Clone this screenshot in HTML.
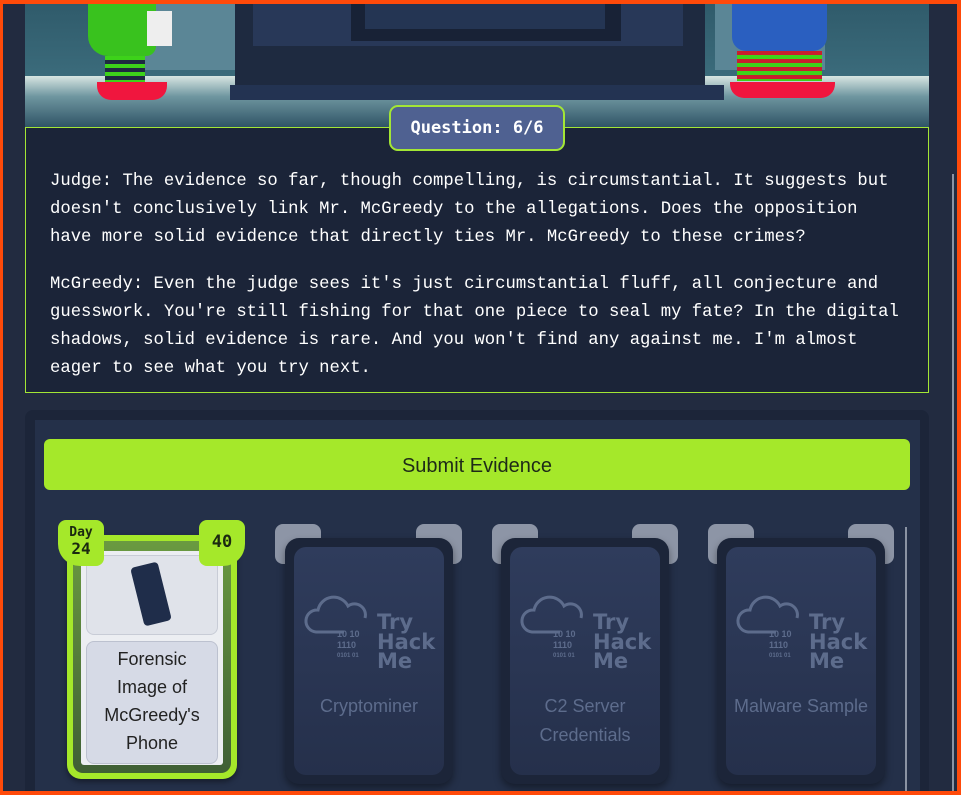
<!DOCTYPE html>
<html><head><style>
*{margin:0;padding:0;box-sizing:border-box}
html,body{width:961px;height:795px;overflow:hidden}
body{background:#222b40;position:relative;font-family:"Liberation Sans",sans-serif}
.abs{position:absolute}
.txt{font-family:"Liberation Mono",monospace;font-size:17.25px;line-height:28px;color:#fff}
.card{position:absolute;width:168px;height:246px;background:#1c2539;border-radius:14px;box-shadow:0 4px 8px rgba(0,0,0,.4)}
.card .in{position:absolute;left:9px;top:9px;right:9px;bottom:9px;border-radius:12px;background:linear-gradient(#2f3c5c,#25304b)}
.tab{position:absolute;width:46px;height:40px;background:#8d95a6;border-radius:8px;top:524px}
.lbl{position:absolute;left:0;right:0;text-align:center;color:#5d6c8c;font-size:18px;line-height:29px}
.logo{position:absolute;left:8px;top:48px}
</style></head><body>
<!-- top image -->
<div class="abs" style="left:25px;top:0;width:904px;height:127px;background:linear-gradient(#2f5a6a,#3d6e7e 70%,#2a4b5c);overflow:hidden">
 <div class="abs" style="left:0;top:76px;width:904px;height:51px;background:linear-gradient(#d8e6e2,#6f96a0 40%,#2f5466)"></div>
 <div class="abs" style="left:110px;top:0;width:110px;height:70px;background:#5b8696"></div>
 <div class="abs" style="left:690px;top:0;width:110px;height:70px;background:#5b8696"></div>
 <div class="abs" style="left:210px;top:0;width:470px;height:96px;background:#1e2a40"></div>
 <div class="abs" style="left:228px;top:0;width:430px;height:46px;background:#283858"></div>
 <div class="abs" style="left:326px;top:0;width:270px;height:41px;background:#182236"></div>
 <div class="abs" style="left:340px;top:0;width:240px;height:29px;background:#243553"></div>
 <div class="abs" style="left:205px;top:85px;width:494px;height:15px;background:#233352"></div>
 <!-- elves -->
 <div class="abs" style="left:63px;top:0;width:68px;height:56px;background:#39c21e;border-radius:0 0 10px 20px"></div>
 <div class="abs" style="left:122px;top:11px;width:25px;height:35px;background:#eee"></div>
 <div class="abs" style="left:80px;top:56px;width:40px;height:26px;background:repeating-linear-gradient(#3dd21a 0 4px,#1e2a40 4px 8px)"></div>
 <div class="abs" style="left:72px;top:82px;width:70px;height:18px;background:#f0163e;border-radius:0 0 14px 14px"></div>
 <div class="abs" style="left:707px;top:0;width:95px;height:51px;background:#2a5fc0;border-radius:0 0 14px 14px"></div>
 <div class="abs" style="left:712px;top:51px;width:85px;height:30px;background:repeating-linear-gradient(#c81e2e 0 4px,#3dd21a 4px 8px)"></div>
 <div class="abs" style="left:705px;top:82px;width:105px;height:16px;background:#f0163e;border-radius:0 0 14px 14px"></div>
</div>
<!-- text box -->
<div class="abs" style="left:25px;top:127px;width:904px;height:266px;background:#1b2438;border:1px solid #a3e635"></div>
<div class="abs" style="left:389px;top:105px;width:176px;height:46px;background:#4f6191;border:2px solid #a3e635;border-radius:9px;color:#fff;font-family:'DejaVu Sans Mono','Liberation Mono',monospace;font-weight:bold;font-size:17px;line-height:42px;text-align:center">Question: 6/6</div>
<div class="abs txt" style="left:50px;top:168px;width:870px">Judge: The evidence so far, though compelling, is circumstantial. It suggests but<br>doesn't conclusively link Mr. McGreedy to the allegations. Does the opposition<br>have more solid evidence that directly ties Mr. McGreedy to these crimes?</div>
<div class="abs txt" style="left:50px;top:271px;width:870px">McGreedy: Even the judge sees it's just circumstantial fluff, all conjecture and<br>guesswork. You're still fishing for that one piece to seal my fate? In the digital<br>shadows, solid evidence is rare. And you won't find any against me. I'm almost<br>eager to see what you try next.</div>
<!-- scrollbar -->
<div class="abs" style="left:952px;top:174px;width:2px;height:630px;background:#8a93a3"></div>
<!-- lower panel -->
<div class="abs" style="left:25px;top:410px;width:904px;height:400px;background:#1c2539;border-radius:8px"></div>
<div class="abs" style="left:35px;top:420px;width:885px;height:400px;background:#243049"></div>
<div class="abs" style="left:44px;top:439px;width:866px;height:51px;background:#a5e82a;border-radius:6px;text-align:center;line-height:54px;font-size:20px;color:#1e2a18">Submit Evidence</div>
<div class="abs" style="left:905px;top:527px;width:2px;height:280px;background:#8a93a3"></div>
<!-- first card -->
<div class="abs" style="left:67px;top:535px;width:170px;height:244px;background:#a5e82a;border-radius:14px;box-shadow:0 3px 6px rgba(0,0,0,.4)"></div>
<div class="abs" style="left:73px;top:541px;width:158px;height:232px;background:linear-gradient(#6a9a40,#3f5f35);border-radius:10px"></div>
<div class="abs" style="left:81px;top:551px;width:142px;height:214px;background:#eceef2;border-radius:3px"></div>
<div class="abs" style="left:86px;top:555px;width:132px;height:80px;background:#e0e3ea;border:1px solid #c8ccd6;border-radius:8px"></div>
<div class="abs" style="left:137px;top:564px;width:28px;height:60px;background:#1f2d4a;border-radius:4px;transform:rotate(-14deg)"></div>
<div class="abs" style="left:86px;top:641px;width:132px;height:123px;background:#d6dae6;border:1px solid #bcc1cf;border-radius:8px;text-align:center;font-size:18px;line-height:28px;color:#222;padding-top:3px">Forensic<br>Image of<br>McGreedy's<br>Phone</div>
<div class="abs" style="left:58px;top:520px;width:46px;height:46px;background:#a5e82a;border-radius:8px 8px 8px 22px;text-align:center;font-family:'DejaVu Sans Mono',monospace;font-weight:bold;color:#1b2a10;font-size:13px;line-height:14px;padding-top:6px">Day<br><span style="font-size:16px;line-height:18px">24</span></div>
<div class="abs" style="left:199px;top:520px;width:46px;height:46px;background:#a5e82a;border-radius:8px 8px 22px 8px;text-align:center;font-family:'DejaVu Sans Mono',monospace;font-weight:bold;color:#1b2a10;font-size:17px;line-height:44px">40</div>
<!-- locked cards -->
<div class="tab" style="left:275px"></div><div class="tab" style="left:416px"></div>
<div class="tab" style="left:492px"></div><div class="tab" style="left:632px"></div>
<div class="tab" style="left:708px"></div><div class="tab" style="left:848px"></div>

<div class="card" style="left:285px;top:538px"><div class="in">
<svg class="logo" width="140" height="80" viewBox="0 0 140 80"><path d="M42 37H14a11 11 0 0 1 2-22 16 16 0 0 1 30-4 11 11 0 0 1 17 12" fill="none" stroke="#5d6c8c" stroke-width="3"/><text x="35" y="42" fill="#5d6c8c" font-size="9" font-family="Liberation Sans" font-weight="bold">10  10</text><text x="35" y="53" fill="#5d6c8c" font-size="9" font-family="Liberation Sans" font-weight="bold">1110</text><text x="35" y="62" fill="#5d6c8c" font-size="6" font-family="Liberation Sans" font-weight="bold">0101  01</text><text x="75" y="34" fill="#5d6c8c" font-size="21" font-family="DejaVu Sans" font-weight="bold">Try</text><text x="75" y="54" fill="#5d6c8c" font-size="21" font-family="DejaVu Sans" font-weight="bold">Hack</text><text x="75" y="73" fill="#5d6c8c" font-size="21" font-family="DejaVu Sans" font-weight="bold">Me</text></svg>
<div class="lbl" style="top:145px">Cryptominer</div></div></div>

<div class="card" style="left:501px;top:538px"><div class="in">
<svg class="logo" width="140" height="80" viewBox="0 0 140 80"><path d="M42 37H14a11 11 0 0 1 2-22 16 16 0 0 1 30-4 11 11 0 0 1 17 12" fill="none" stroke="#5d6c8c" stroke-width="3"/><text x="35" y="42" fill="#5d6c8c" font-size="9" font-family="Liberation Sans" font-weight="bold">10  10</text><text x="35" y="53" fill="#5d6c8c" font-size="9" font-family="Liberation Sans" font-weight="bold">1110</text><text x="35" y="62" fill="#5d6c8c" font-size="6" font-family="Liberation Sans" font-weight="bold">0101  01</text><text x="75" y="34" fill="#5d6c8c" font-size="21" font-family="DejaVu Sans" font-weight="bold">Try</text><text x="75" y="54" fill="#5d6c8c" font-size="21" font-family="DejaVu Sans" font-weight="bold">Hack</text><text x="75" y="73" fill="#5d6c8c" font-size="21" font-family="DejaVu Sans" font-weight="bold">Me</text></svg>
<div class="lbl" style="top:145px">C2 Server<br>Credentials</div></div></div>

<div class="card" style="left:717px;top:538px"><div class="in">
<svg class="logo" width="140" height="80" viewBox="0 0 140 80"><path d="M42 37H14a11 11 0 0 1 2-22 16 16 0 0 1 30-4 11 11 0 0 1 17 12" fill="none" stroke="#5d6c8c" stroke-width="3"/><text x="35" y="42" fill="#5d6c8c" font-size="9" font-family="Liberation Sans" font-weight="bold">10  10</text><text x="35" y="53" fill="#5d6c8c" font-size="9" font-family="Liberation Sans" font-weight="bold">1110</text><text x="35" y="62" fill="#5d6c8c" font-size="6" font-family="Liberation Sans" font-weight="bold">0101  01</text><text x="75" y="34" fill="#5d6c8c" font-size="21" font-family="DejaVu Sans" font-weight="bold">Try</text><text x="75" y="54" fill="#5d6c8c" font-size="21" font-family="DejaVu Sans" font-weight="bold">Hack</text><text x="75" y="73" fill="#5d6c8c" font-size="21" font-family="DejaVu Sans" font-weight="bold">Me</text></svg>
<div class="lbl" style="top:145px">Malware Sample</div></div></div>
<!-- orange frame overlay -->
<div class="abs" style="left:0;top:0;width:961px;height:795px;border:4px solid #ff4a0a;border-left-width:3px;z-index:10;pointer-events:none"></div>
</body></html>
